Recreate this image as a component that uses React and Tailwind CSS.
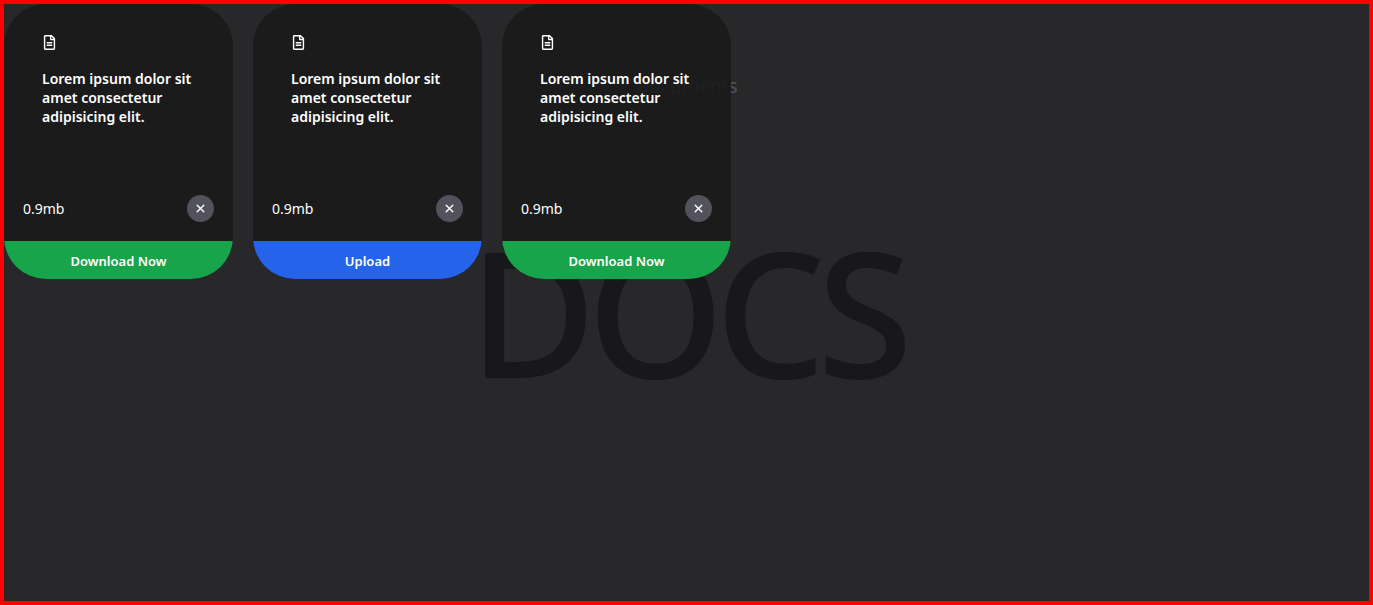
import { FaRegFileAlt } from "react-icons/fa";
import { IoClose } from "react-icons/io5";

const cards = [
  { id: 1, action: "Download Now", color: "bg-[#18a44b]" },
  { id: 2, action: "Upload", color: "bg-[#2563eb]" },
  { id: 3, action: "Download Now", color: "bg-[#18a44b]" },
];

function Background() {
  return (
    <div className="absolute inset-0 flex flex-col">
      <p className="absolute top-16 w-full text-center text-[19px] leading-9 text-zinc-600">
        Documents
      </p>
      <h1 className="m-auto pt-4 text-[174px] leading-none font-medium tracking-tighter text-[#18181a]">
        DOCS
      </h1>
    </div>
  );
}

function Card({ action, color }) {
  return (
    <article className="flex h-[275px] w-[229px] flex-col overflow-hidden rounded-[42px] bg-[#19191b]/90 text-white">
      <div className="flex-1 px-[38px] pt-[31px]">
        <FaRegFileAlt className="size-[15px]" />
        <p className="mt-[19px] text-[14px] leading-[19px] font-semibold">
          Lorem ipsum dolor sit amet consectetur adipisicing elit.
        </p>
      </div>
      <div className="flex items-center justify-between px-[19px] pb-[19px]">
        <span className="text-[14px] leading-5">0.9mb</span>
        <button
          type="button"
          aria-label="Remove"
          className="flex size-[27px] items-center justify-center rounded-full bg-zinc-600"
        >
          <IoClose className="size-[15px]" />
        </button>
      </div>
      <button
        type="button"
        className={`flex h-[38px] items-center justify-center pt-1 text-[13px] font-semibold ${color}`}
      >
        {action}
      </button>
    </article>
  );
}

export default function App() {
  return (
    <main className="relative min-h-screen overflow-hidden border-4 border-[#ff0000] bg-[#28282a] font-['Noto_Sans','Open_Sans',sans-serif]">
      <Background />
      <section className="relative flex flex-wrap gap-5">
        {cards.map((card) => (
          <Card key={card.id} action={card.action} color={card.color} />
        ))}
      </section>
    </main>
  );
}
